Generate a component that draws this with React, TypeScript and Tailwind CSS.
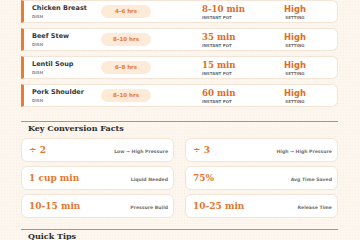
const rows = [
  { dish: "Chicken Breast", slow: "4–6 hrs", fast: "8-10 min", setting: "High" },
  { dish: "Beef Stew", slow: "8–10 hrs", fast: "35 min", setting: "High" },
  { dish: "Lentil Soup", slow: "6–8 hrs", fast: "15 min", setting: "High" },
  { dish: "Pork Shoulder", slow: "8–10 hrs", fast: "60 min", setting: "High" },
];

const facts = [
  { value: "÷ 2", label: "Low → High Pressure" },
  { value: "÷ 3", label: "High → High Pressure" },
  { value: "1 cup min", label: "Liquid Needed" },
  { value: "75%", label: "Avg Time Saved" },
  { value: "10-15 min", label: "Pressure Build" },
  { value: "10-25 min", label: "Release Time" },
];

const sans = "font-['DejaVu_Sans',sans-serif]";
const serif = "font-['DejaVu_Serif',serif]";

function Row({ dish, slow, fast, setting }: (typeof rows)[number]) {
  return (
    <div className="flex h-[23px] items-center rounded-r-[6px] border border-l-[3px] border-[#f3e4d6] border-l-[#ee7a32] bg-white pl-[8px]">
      <div className="w-[69px]">
        <div className={`${sans} text-[6.5px] font-bold leading-[9px] text-[#353535]`}>{dish}</div>
        <div className={`${sans} mt-[1px] text-[4px] font-bold uppercase leading-[5px] text-[#8a8a8a]`}>Dish</div>
      </div>
      <div
        className={`${sans} flex h-[13px] w-[50px] items-center justify-center rounded-full bg-[#fdebd8] text-[5.5px] font-bold text-[#e8782f]`}
      >
        {slow}
      </div>
      <div className="ml-[51px] w-[82px]">
        <div className={`${serif} text-[8.6px] font-bold leading-[11px] text-[#dd6c27]`}>{fast}</div>
        <div className={`${sans} text-[4px] font-bold uppercase leading-[5px] text-[#6f6f6f]`}>Instant Pot</div>
      </div>
      <div className="flex w-[22px] flex-col items-center">
        <div className={`${sans} text-[8.4px] font-bold leading-[11px] text-[#dd6c27]`}>{setting}</div>
        <div className={`${sans} text-[4px] font-bold uppercase leading-[5px] text-[#6f6f6f]`}>Setting</div>
      </div>
    </div>
  );
}

function Heading({ children }: { children: string }) {
  return (
    <div className="border-t border-[#e9823c]">
      <h2 className={`${serif} pl-[7px] text-[8px] font-bold leading-[12px] text-[#2e2e2e]`}>{children}</h2>
    </div>
  );
}

export default function App() {
  return (
    <div className="min-h-screen bg-[#fcf6ef] bg-[radial-gradient(#f7eee4_0.6px,transparent_0.6px)] bg-[length:3px_3px] pl-[21px] pr-[22px]">
      <div className="flex flex-col gap-[5px]">
        {rows.map((r) => (
          <Row key={r.dish} {...r} />
        ))}
      </div>

      <div className="mt-[14px]">
        <Heading>Key Conversion Facts</Heading>
      </div>
      <div className="mt-[4px] grid grid-cols-2 gap-x-[11px] gap-y-[4px]">
        {facts.map((f) => (
          <div
            key={f.label}
            className="flex h-[24px] items-baseline justify-between rounded-[6px] border border-[#f3e4d6] bg-white pl-[7px] pr-[5px] pt-[6px]"
          >
            <span className={`${serif} text-[9px] font-bold leading-[11px] text-[#e3772f]`}>{f.value}</span>
            <span className={`${sans} text-[4.6px] font-bold leading-[6px] text-[#707070]`}>{f.label}</span>
          </div>
        ))}
      </div>

      <div className="mt-[11px]">
        <Heading>Quick Tips</Heading>
      </div>
    </div>
  );
}
